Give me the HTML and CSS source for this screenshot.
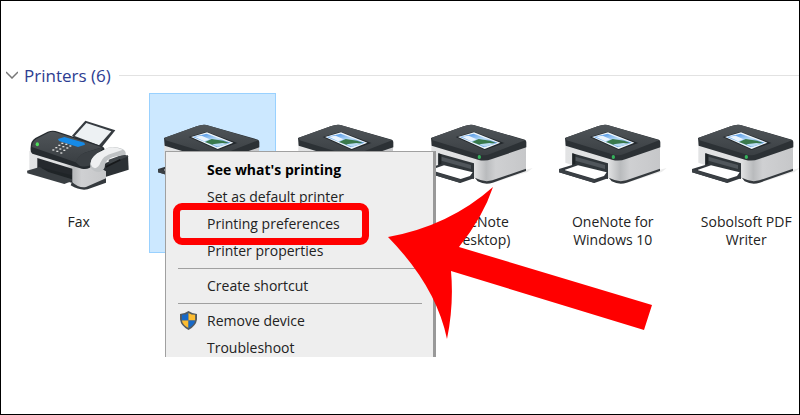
FILE: index.html
```html
<!DOCTYPE html>
<html lang="en">
<head>
    <meta charset="UTF-8">
    <meta name="viewport" content="width=device-width, initial-scale=1.0">
    <title>Printers</title>
    <link rel="stylesheet" href="styles.css">
</head>
<body>
    <!-- Shared icon shapes -->
    <svg class="symbols" aria-hidden="true">
        <defs>
            <linearGradient id="lidShade" x1="0" y1="0" x2="0" y2="1">
                <stop offset="0" stop-color="#505559"/>
                <stop offset="1" stop-color="#3a3f43"/>
            </linearGradient>
            <linearGradient id="bodyShade" x1="0" y1="0" x2="1" y2="0">
                <stop offset="0" stop-color="#e2e3e4"/>
                <stop offset="0.46" stop-color="#dfe0e1"/>
                <stop offset="0.58" stop-color="#b9bbbd"/>
                <stop offset="0.68" stop-color="#cfd0d2"/>
                <stop offset="1" stop-color="#c6c7c9"/>
            </linearGradient>
            <linearGradient id="screenShade" x1="0" y1="0" x2="1" y2="1">
                <stop offset="0" stop-color="#2f7fe0"/>
                <stop offset="0.5" stop-color="#b9dcf8"/>
                <stop offset="1" stop-color="#2c6fc4"/>
            </linearGradient>
        </defs>
        <symbol id="printer" viewBox="9 21 360 231">
            <path d="M230 214L330 179L350 174L335 186L232 218Z" fill="#ececec"/>
            <path d="M174 200L185 214Q208 226 230 218L330 183L330 170Z" fill="#34393d"/>
            <path d="M46 98L46 158L180 205Q205 218 229 211L330 176L330 96L210 120Z" fill="url(#bodyShade)"/>
            <path d="M67 130L174 160L174 207L67 176Z" fill="#30363a"/>
            <path d="M76 140L165 165L165 177L76 152Z" fill="#50565b"/>
            <path d="M67 130L76 133L76 165L67 168Z" fill="#1f2427"/>
            <path d="M27 177L76 162L174 192L174 205L133 219L27 187Z" fill="#33383d"/>
            <path d="M45 179L84 166L170 187L162 198L134 207L45 181Z" fill="#fff"/>
            <path d="M27 177L134 209L134 219L27 187Z" fill="#3b4045"/>
            <path d="M45 84L143 49Q164 40 180 47L327 89Q331 91 331 97L331 112L228 147Q207 155 186 149L47 107Z" fill="#2c3135"/>
            <path d="M47 83L143 49Q164 40 180 47L327 91L222 132Q205 139 187 133L50 91Z" fill="url(#lidShade)"/>
            <path d="M119 81L173 65L265 99L206 120Z" fill="#23282c"/>
            <path d="M126 81L174 67L253 98L206 117Z" fill="#eef6fb"/>
            <path d="M132 81L173 71L245 98L204 112Z" fill="url(#screenShade)"/>
            <path d="M136 80L158 77L182 88L166 94Z" fill="#eaf4fd"/>
            <path d="M168 96L188 87L222 92L238 98L220 104L190 104Z" fill="#39794c"/>
            <path d="M190 103L220 99L238 101L206 110Z" fill="#b8daf2"/>
            <ellipse cx="190" cy="141" rx="5" ry="6" fill="#35b35c"/>
        </symbol>
        <symbol id="fax" viewBox="57 201 360 231">
            <path d="M318 338L384 316L386 359L316 381L281 365Z" fill="#2c3135"/>
            <path d="M326 329L371 313L386 319L326 342Z" fill="#41464a"/>
            <path d="M88 303L88 361L213 400Q240 420 260 415L318 389L318 364L260 333Z" fill="url(#bodyShade)"/>
            <path d="M216 396Q238 416 258 411L318 385L318 398L263 418Q240 423 212 406Z" fill="#34393d"/>
            <path d="M112 324L217 356L217 398L112 368Z" fill="#25292d"/>
            <path d="M81 362L119 351L216 386L216 393L193 402L82 370Z" fill="#393e42"/>
            <path d="M120 352L216 376L216 388L145 366Z" fill="#1f2427"/>
            <path d="M216 257L256 212L346 241L306 291L258 289Z" fill="#363b40"/>
            <path d="M224 258L259 219L334 244L297 286Z" fill="#edf1f3"/>
            <path d="M92 291Q92 273 106 264L143 245Q158 240 174 245L306 289Q319 295 311 309L278 345Q267 361 245 356L97 311Q90 306 92 291Z" fill="#262b2f"/>
            <path d="M96 291Q97 275 109 267L145 248Q157 243 171 248L306 292L254 308Q235 318 227 337Z" fill="url(#lidShade)"/>
            <path d="M227 337Q235 316 254 308L310 291L278 340Q265 354 240 348Z" fill="#3b4044"/>
            <path d="M174 267L193 261L253 278L255 284L234 291L177 273Z" fill="#168ae6"/>
            <g fill="#dedfdd">
                <rect x="184" y="278" width="6" height="4"/><rect x="196" y="281" width="6" height="4"/><rect x="208" y="286" width="6" height="4"/>
                <rect x="175" y="284" width="6" height="4"/><rect x="187" y="288" width="6" height="4"/><rect x="199" y="292" width="6" height="4"/>
                <rect x="166" y="291" width="6" height="4"/><rect x="178" y="295" width="6" height="4"/><rect x="190" y="299" width="6" height="4"/>
                <rect x="157" y="298" width="6" height="4"/><rect x="169" y="302" width="6" height="4"/><rect x="181" y="307" width="6" height="4"/>
            </g>
            <ellipse cx="112" cy="283" rx="5" ry="6" fill="#4fdf5b"/>
            <path d="M271 352Q267 329 290 311L324 293Q345 288 368 297Q379 304 377 314L350 319Q322 323 315 343Q316 361 299 366Q280 367 271 352Z" fill="#bfc2c4"/>
            <path d="M272 342Q271 326 292 310L325 293Q345 288 369 299L340 309Q310 316 301 338Q297 351 285 355Q275 352 272 342Z" fill="#eff0f1"/>
            <path d="M317 351L361 329" stroke="#17191b" stroke-width="5"/>
        </symbol>
        <symbol id="shield" viewBox="0 0 18 20">
            <path d="M9 0Q13 3 18 3V9Q17 16 9 20Q1 16 0 9V3Q5 3 9 0Z" fill="#545b60"/>
            <path d="M9 2Q6 4 2 4V10H9Z" fill="#1769c7"/>
            <path d="M9 2Q12 4 16 4V10H9Z" fill="#fdbd31"/>
            <path d="M2 10H9V18Q3 15 2 10Z" fill="#fdbd31"/>
            <path d="M16 10H9V18Q15 15 16 10Z" fill="#1769c7"/>
        </symbol>
    </svg>

    <main class="explorer">
        <div class="group-header">
            <button type="button" class="group-toggle" aria-expanded="true">
                <svg class="chevron" viewBox="0 0 12 8" aria-hidden="true"><path d="M0 1L6 7L12 1"/></svg>
                Printers (6)
            </button>
            <span class="group-line"></span>
        </div>

        <div class="devices">
            <a href="#" class="device">
                <svg class="device-icon" aria-hidden="true"><use href="#fax"/></svg>
                <span>Fax</span>
            </a>
            <a href="#" class="device selected">
                <svg class="device-icon" aria-hidden="true"><use href="#printer"/></svg>
            </a>
            <a href="#" class="device">
                <svg class="device-icon" aria-hidden="true"><use href="#printer"/></svg>
            </a>
            <a href="#" class="device">
                <svg class="device-icon" aria-hidden="true"><use href="#printer"/></svg>
                <span>OneNote<br>(Desktop)</span>
            </a>
            <a href="#" class="device">
                <svg class="device-icon" aria-hidden="true"><use href="#printer"/></svg>
                <span>OneNote for<br>Windows 10</span>
            </a>
            <a href="#" class="device">
                <svg class="device-icon" aria-hidden="true"><use href="#printer"/></svg>
                <span>Sobolsoft PDF<br>Writer</span>
            </a>
        </div>

        <!-- Right-click menu of the selected printer -->
        <div class="menu">
            <button type="button" class="menu-item default">See what's printing</button>
            <button type="button" class="menu-item">Set as default printer</button>
            <button type="button" class="menu-item">Printing preferences</button>
            <button type="button" class="menu-item">Printer properties</button>
            <hr>
            <button type="button" class="menu-item">Create shortcut</button>
            <hr>
            <button type="button" class="menu-item"><svg class="shield" aria-hidden="true"><use href="#shield"/></svg>Remove device</button>
            <button type="button" class="menu-item">Troubleshoot</button>
        </div>

        <div class="highlight"></div>
        <svg class="arrow" viewBox="388 187 264 152" aria-hidden="true">
            <path d="M388 237Q449 226 493 187Q483 217 459 247L652 305L644 330L451 271Q454 305 447 339Q436 286 388 237Z" fill="#f00"/>
        </svg>
    </main>
</body>
</html>
```
FILE: styles.css
```css
* {
    box-sizing: border-box;
}
body {
    margin: 0;
    min-height: 100vh;
    border: 1px solid #000;
    background-color: #fff;
    color: #222;
    font-family: "Open Sans", "Noto Sans", sans-serif;
    font-size: 14px;
}
button {
    border: none;
    background: none;
    color: inherit;
    font: inherit;
    cursor: pointer;
}
.symbols {
    position: absolute;
    width: 0;
    height: 0;
}
.explorer {
    position: relative;
    overflow: hidden;
    padding: 62px 0 104px;
}

/* group header */
.group-header {
    display: flex;
    align-items: center;
    gap: 8px;
    height: 24px;
    margin-bottom: 6px;
    padding-left: 5px;
}
.group-toggle {
    display: flex;
    align-items: center;
    gap: 6px;
    padding: 0;
    color: #2d3d91;
    font-size: 17px;
}
.chevron {
    width: 12px;
    height: 8px;
    fill: none;
    stroke: #777;
    stroke-width: 1.5;
}
.group-line {
    flex: 1;
    height: 1px;
    background-color: #e2e2e2;
}

/* device tiles */
.devices {
    display: grid;
    grid-template-columns: repeat(6, 1fr);
    gap: 6px;
    margin: 0 -11px 0 14px;
}
.device {
    display: flex;
    flex-direction: column;
    align-items: center;
    min-height: 160px;
    padding-top: 24px;
    color: #222;
    line-height: 18px;
    text-align: center;
    text-decoration: none;
}
.device.selected {
    border: 1px solid #99d1ff;
    background-color: #cce8ff;
    padding-top: 23px;
}
.device-icon {
    width: 120px;
    height: 77px;
    margin-bottom: 19px;
}

/* context menu */
.menu {
    position: absolute;
    top: 150px;
    bottom: 0;
    left: 164px;
    width: 271px;
    padding: 4px 0 0;
    overflow: hidden;
    border: 1px solid #a0a0a0;
    border-right: 3px solid #999;
    border-bottom: none;
    background-color: #eee;
}
.menu-item {
    position: relative;
    display: block;
    width: 100%;
    height: 27px;
    padding: 0 0 0 41px;
    text-align: left;
}
.menu-item:hover {
    background-color: #fff;
}
.menu-item.default {
    color: #000;
    font-weight: bold;
}
.menu hr {
    height: 1px;
    margin: 4px 11px 3px 12px;
    border: none;
    background-color: #a0a0a0;
}
.shield {
    position: absolute;
    top: 4px;
    left: 14px;
    width: 17px;
    height: 19px;
}

/* callouts */
.highlight {
    position: absolute;
    top: 202px;
    left: 172px;
    width: 196px;
    height: 42px;
    border: 7px solid #f00;
    border-radius: 9px;
    pointer-events: none;
}
.arrow {
    position: absolute;
    top: 186px;
    left: 387px;
    width: 264px;
    height: 152px;
    pointer-events: none;
}
```
